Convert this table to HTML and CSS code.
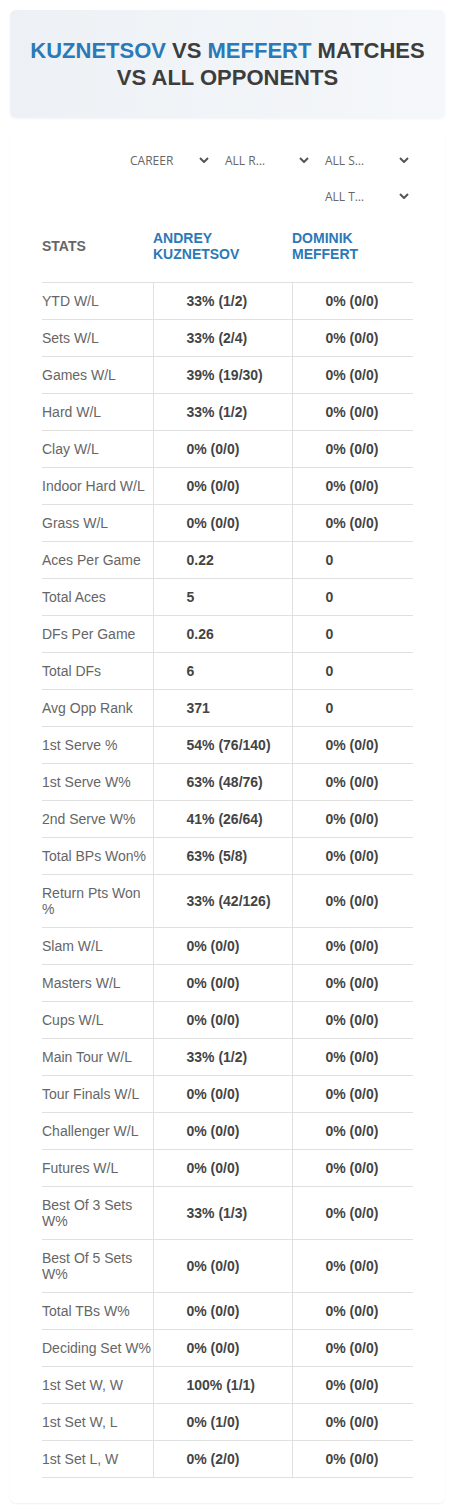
FILE: index.html
```html
<!DOCTYPE html>
<html lang="en">
<head>
    <meta charset="UTF-8">
    <meta name="viewport" content="width=device-width, initial-scale=1.0">
    <title>Kuznetsov vs Meffert</title>
    <link rel="stylesheet" href="styles.css">
</head>
<body>
    <div class="page">
        <div class="title-card">
            <h1><span class="blue">KUZNETSOV</span> VS <span class="blue">MEFFERT</span> MATCHES<br>VS ALL OPPONENTS</h1>
        </div>
        <div class="stats-card">
            <div class="filters">
                <div class="select first"><span>CAREER</span><svg viewBox="0 0 10 6"><path d="M1 1l4 4 4-4"/></svg></div>
                <div class="select"><span>ALL R…</span><svg viewBox="0 0 10 6"><path d="M1 1l4 4 4-4"/></svg></div>
                <div class="select"><span>ALL S…</span><svg viewBox="0 0 10 6"><path d="M1 1l4 4 4-4"/></svg></div>
                <div class="select"><span>ALL T…</span><svg viewBox="0 0 10 6"><path d="M1 1l4 4 4-4"/></svg></div>
            </div>
            <table class="stats">
                <thead>
                    <tr>
                        <th class="label">STATS</th>
                        <th class="player">ANDREY<br>KUZNETSOV</th>
                        <th class="player">DOMINIK<br>MEFFERT</th>
                    </tr>
                </thead>
                <tbody id="rows"></tbody>
            </table>
        </div>
    </div>
    <script>
        const rows = [
            ["YTD W/L", "33% (1/2)", "0% (0/0)"],
            ["Sets W/L", "33% (2/4)", "0% (0/0)"],
            ["Games W/L", "39% (19/30)", "0% (0/0)"],
            ["Hard W/L", "33% (1/2)", "0% (0/0)"],
            ["Clay W/L", "0% (0/0)", "0% (0/0)"],
            ["Indoor Hard W/L", "0% (0/0)", "0% (0/0)"],
            ["Grass W/L", "0% (0/0)", "0% (0/0)"],
            ["Aces Per Game", "0.22", "0"],
            ["Total Aces", "5", "0"],
            ["DFs Per Game", "0.26", "0"],
            ["Total DFs", "6", "0"],
            ["Avg Opp Rank", "371", "0"],
            ["1st Serve %", "54% (76/140)", "0% (0/0)"],
            ["1st Serve W%", "63% (48/76)", "0% (0/0)"],
            ["2nd Serve W%", "41% (26/64)", "0% (0/0)"],
            ["Total BPs Won%", "63% (5/8)", "0% (0/0)"],
            ["Return Pts Won %", "33% (42/126)", "0% (0/0)"],
            ["Slam W/L", "0% (0/0)", "0% (0/0)"],
            ["Masters W/L", "0% (0/0)", "0% (0/0)"],
            ["Cups W/L", "0% (0/0)", "0% (0/0)"],
            ["Main Tour W/L", "33% (1/2)", "0% (0/0)"],
            ["Tour Finals W/L", "0% (0/0)", "0% (0/0)"],
            ["Challenger W/L", "0% (0/0)", "0% (0/0)"],
            ["Futures W/L", "0% (0/0)", "0% (0/0)"],
            ["Best Of 3 Sets W%", "33% (1/3)", "0% (0/0)"],
            ["Best Of 5 Sets W%", "0% (0/0)", "0% (0/0)"],
            ["Total TBs W%", "0% (0/0)", "0% (0/0)"],
            ["Deciding Set W%", "0% (0/0)", "0% (0/0)"],
            ["1st Set W, W", "100% (1/1)", "0% (0/0)"],
            ["1st Set W, L", "0% (1/0)", "0% (0/0)"],
            ["1st Set L, W", "0% (2/0)", "0% (0/0)"]
        ];

        const tbody = document.getElementById('rows');
        rows.forEach(([name, a, b]) => {
            const tr = document.createElement('tr');
            tr.innerHTML = `<td class="label">${name}</td><td class="value">${a}</td><td class="value">${b}</td>`;
            tbody.appendChild(tr);
        });
    </script>
</body>
</html>
```

FILE: styles.css
```css
* {
    margin: 0;
    padding: 0;
    box-sizing: border-box;
}

body {
    font-family: "Liberation Sans", Arial, sans-serif;
    background: #fff;
    color: #444;
}

.page {
    padding: 10px;
}

.title-card {
    height: 108px;
    border-radius: 6px;
    background: linear-gradient(to right, #edf1f5, #f5f7fa);
    box-shadow: 0 1px 3px rgba(0, 0, 0, 0.05);
    display: flex;
    align-items: center;
    justify-content: center;
    padding: 0 10px;
}

.title-card h1 {
    font-size: 22px;
    line-height: 27px;
    font-weight: bold;
    text-align: center;
    color: #3d3d3d;
}

.blue {
    color: #2b79b7;
}

.stats-card {
    margin-top: 10px;
    padding: 14px 32px 25px;
    border-radius: 6px;
    box-shadow: 0 1px 2px rgba(0, 0, 0, 0.06);
}

.filters {
    display: flex;
    flex-wrap: wrap;
    justify-content: flex-end;
    margin-right: -7px;
    margin-left: 78px;
}

.select {
    width: 100px;
    height: 36px;
    display: flex;
    align-items: center;
    justify-content: space-between;
    padding: 0 11px 0 5px;
    font-family: "Open Sans", sans-serif;
    font-size: 12px;
    color: #666;
}

.select.first {
    padding-left: 10px;
}

.select svg {
    width: 10px;
    height: 6px;
    fill: none;
    stroke: #555;
    stroke-width: 2;
}

.stats {
    width: 100%;
    margin-top: 8px;
    border-collapse: collapse;
    font-size: 14px;
}

.stats th {
    text-align: left;
    font-size: 14px;
    line-height: 16px;
    font-weight: bold;
    padding: 8px 0 20px;
    vertical-align: middle;
}

.stats th.label {
    width: 111px;
    color: #666;
}

.stats th.player {
    color: #2b79b7;
}

.stats th.player:nth-child(2) {
    width: 139px;
}

.stats td {
    line-height: 16px;
    padding: 10px 0 10px;
    border-top: 1px solid #e0e0e0;
    border-bottom: 1px solid #e0e0e0;
}

.stats td.label {
    color: #666;
}

.stats td.value {
    border-left: 1px solid #e0e0e0;
    padding-left: 33px;
    font-weight: bold;
    color: #444;
}
```
